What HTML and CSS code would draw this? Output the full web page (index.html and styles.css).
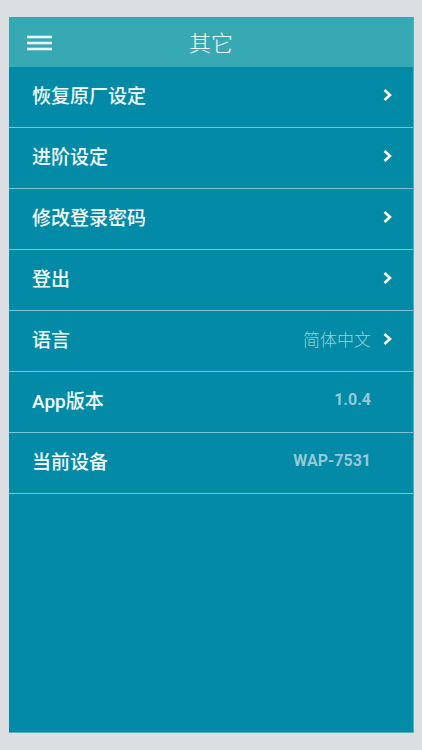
FILE: index.html
```html
<!DOCTYPE html>
<html lang="zh-CN">
<head>
<meta charset="utf-8">
<link rel="stylesheet" href="styles.css">
</head>
<body>
<div class="phone">
  <header class="topbar">
    <svg class="menu" width="26" height="16" viewBox="0 0 26 16"><g stroke="#e6f7fa" stroke-width="2.6" stroke-linecap="butt"><line x1="0" y1="2" x2="25" y2="2"/><line x1="0" y1="8" x2="25" y2="8"/><line x1="0" y1="14" x2="25" y2="14"/></g></svg>
    <h1 class="title">其它</h1>
  </header>
  <ul class="list">
    <li class="row"><span class="label">恢复原厂设定</span><span class="value"></span><span class="chev"><svg width="9" height="14" viewBox="0 0 9 14"><path d="M1.5 2 L7 7 L1.5 12" fill="none" stroke="#fff" stroke-width="2.6"/></svg></span></li>
    <li class="row"><span class="label">进阶设定</span><span class="value"></span><span class="chev"><svg width="9" height="14" viewBox="0 0 9 14"><path d="M1.5 2 L7 7 L1.5 12" fill="none" stroke="#fff" stroke-width="2.6"/></svg></span></li>
    <li class="row"><span class="label">修改登录密码</span><span class="value"></span><span class="chev"><svg width="9" height="14" viewBox="0 0 9 14"><path d="M1.5 2 L7 7 L1.5 12" fill="none" stroke="#fff" stroke-width="2.6"/></svg></span></li>
    <li class="row"><span class="label">登出</span><span class="value"></span><span class="chev"><svg width="9" height="14" viewBox="0 0 9 14"><path d="M1.5 2 L7 7 L1.5 12" fill="none" stroke="#fff" stroke-width="2.6"/></svg></span></li>
    <li class="row"><span class="label">语言</span><span class="value cjk">简体中文</span><span class="chev"><svg width="9" height="14" viewBox="0 0 9 14"><path d="M1.5 2 L7 7 L1.5 12" fill="none" stroke="#fff" stroke-width="2.6"/></svg></span></li>
    <li class="row"><span class="label app">App版本</span><span class="value num">1.0.4</span><span class="chev"></span></li>
    <li class="row"><span class="label">当前设备</span><span class="value num">WAP-7531</span><span class="chev"></span></li>
  </ul>
</div>
</body>
</html>
```

FILE: styles.css
```css
html, body {
  margin: 0;
  padding: 0;
  background: #dcdfe1;
}
body {
  padding: 17px 8px 17px 9px;
  font-family: "Noto Sans CJK SC", "Noto Sans", sans-serif;
}
.phone {
  width: 405px;
  height: 716px;
  background: #028aa6;
  display: flex;
  flex-direction: column;
  box-sizing: border-box;
  border-right: 1px solid #4eb0c2;
  border-bottom: 1px solid #4eb0c2;
}
.topbar {
  height: 50px;
  background: #37a9b5;
  display: flex;
  align-items: center;
  position: relative;
  flex: none;
}
.menu {
  margin-left: 18px;
  margin-top: 1px;
}
.title {
  position: absolute;
  left: 0;
  right: 0;
  top: 0;
  margin: 0;
  text-align: center;
  line-height: 48px;
  font-size: 22px;
  font-weight: 300;
  color: #f2fbfc;
  pointer-events: none;
}
.list {
  list-style: none;
  margin: 0;
  padding: 0;
}
.row {
  height: 60px;
  box-sizing: content-box;
  border-bottom: 1px solid #7cc4d3;
  display: flex;
  align-items: center;
  padding: 0 21px 0 23px;
}
.row > span {
  margin-top: -5px;
}
.label {
  flex: 1;
  font-size: 19px;
  color: #f4fbfd;
  font-weight: 500;
}
.label.app {
  font-family: Roboto, "Noto Sans CJK SC", sans-serif;
  font-weight: 500;
}
.value {
  color: #9ccfdc;
  font-size: 16px;
}
.value.cjk {
  font-size: 17px;
  font-weight: 300;
}
.value.num {
  font-family: Roboto, "Noto Sans", sans-serif;
  font-weight: 700;
  color: #95c9d6;
}
.chev {
  width: 21px;
  display: flex;
  justify-content: flex-end;
  align-items: center;
}
.chev svg {
  display: block;
}
```
